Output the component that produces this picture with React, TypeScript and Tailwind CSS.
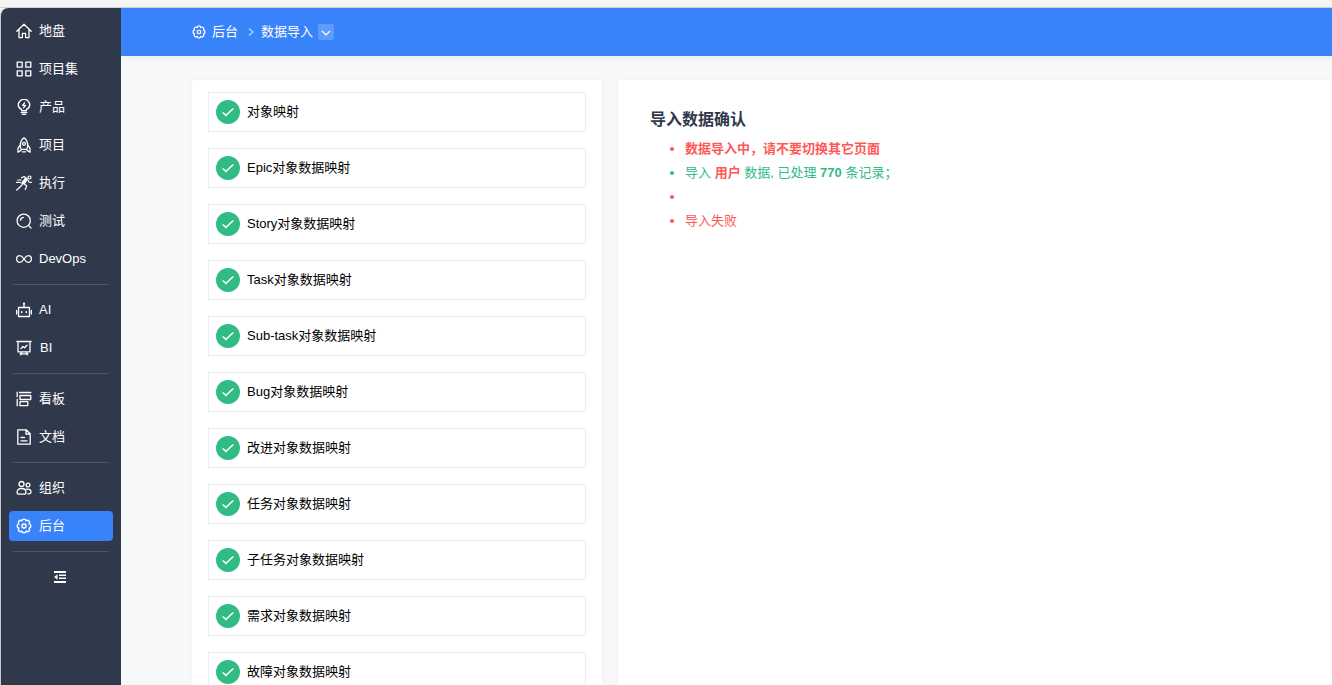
import React from "react";

interface NavItem {
  label: string;
  icon: React.ReactNode;
  active?: boolean;
  textClass?: string;
}

const Svg: React.FC<{ children: React.ReactNode; size?: number; width?: number }> = ({
  children,
  size = 16,
  width = 1.3,
}) => (
  <svg
    width={size}
    height={size}
    viewBox="0 0 16 16"
    fill="none"
    stroke="currentColor"
    strokeWidth={width}
    strokeLinecap="round"
    strokeLinejoin="round"
    className="shrink-0"
  >
    {children}
  </svg>
);

const GearIcon: React.FC<{ size?: number }> = ({ size = 16 }) => (
  <Svg size={size} width={1.4}>
    <path d="M5.900 2.900a2.130 2.130 0 014.200 0a2.130 2.130 0 013 3a2.130 2.130 0 010 4.200a2.130 2.130 0 01-3 3a2.130 2.130 0 01-4.200 0a2.130 2.130 0 01-3-3a2.130 2.130 0 010-4.200a2.130 2.130 0 013-3z" />
    <circle cx="8" cy="8" r="2" />
  </Svg>
);

const groups: NavItem[][] = [
  [
    {
      label: "地盘",
      icon: (
        <Svg>
          <path d="M.8 8.2L8 1.2l7.2 7M3 6.6v8h3.4v-4.2h3.2v4.2H13v-8" />
        </Svg>
      ),
    },
    {
      label: "项目集",
      icon: (
        <Svg>
          <path d="M1.2 1.2h5v5h-5zM9.8 1.2h5v5h-5zM1.2 9.8h5v5h-5zM9.8 9.8h5v5h-5z" />
        </Svg>
      ),
    },
    {
      label: "产品",
      icon: (
        <Svg>
          <path d="M5.600 11.600v-1.200C3.600 9.600 2.300 8 2.300 6a5.700 5.700 0 0111.400 0c0 2-1.300 3.600-3.300 4.400v1.200zM5.200 13.500h5.600M6.500 15.400h3" />
          <path d="M8.600 3.800L6.500 6.300h3L7.500 8.800" />
        </Svg>
      ),
    },
    {
      label: "项目",
      icon: (
        <Svg>
          <path d="M5 12.300c-1.400-4.700-.8-8.600 3-11.500 3.800 2.900 4.400 6.800 3 11.500zM4.300 8L2 11.200v4l3-1.800M11.700 8l2.300 3.200v4l-3-1.800M6.500 14.800h3" />
          <circle cx="8" cy="6.800" r="1.500" />
        </Svg>
      ),
    },
    {
      label: "执行",
      icon: (
        <Svg width={1.2}>
          <circle cx="13.500" cy="2.500" r="1.500" />
          <path d="M5.500 2.800L8 1.500l3 2.200M12 5l1 2.200 2.300.2M8.500 9.200l2.300 1.500-1.600 3.800M6 9.800L4.500 11.500.8 15M1.800 5h3.500M.5 7.300h4" />
          <path d="M9.800 4.200L6.800 8.200" strokeWidth="3" />
          <path d="M10.800 4.500L8.500 8.200" strokeWidth="1.800" />
        </Svg>
      ),
    },
    {
      label: "测试",
      icon: (
        <Svg>
          <circle cx="7.700" cy="7.700" r="6.600" />
          <path d="M12.600 12.600l2.400 2.400M4.500 7.300a3.300 3.300 0 012.800-2.900" />
        </Svg>
      ),
    },
    {
      label: "DevOps",
      icon: (
        <Svg>
          <path d="M8 8C6.500 5.700 5.500 4.700 3.900 4.700a3.300 3.300 0 000 6.600C5.500 11.300 6.500 10.300 8 8s2.500-3.300 4.100-3.300a3.300 3.300 0 010 6.600C10.500 11.300 9.500 10.300 8 8z" />
        </Svg>
      ),
    },
  ],
  [
    {
      label: "AI",
      icon: (
        <Svg>
          <path d="M2.500 5.500h11v9h-11zM8 5.500V2M.6 8.500v3.500M15.400 8.500v3.500" />
          <path d="M5.700 9.800v.6M10.300 9.800v.6" strokeWidth="1.600" />
          <circle cx="8" cy="1.700" r=".5" />
        </Svg>
      ),
    },
    {
      label: "BI",
      textClass: "pl-px",
      icon: (
        <Svg>
          <path d="M.8 1.500h14.400M2 1.500v10.300h12V1.500M5.800 11.800l-1 3M10.200 11.800l1 3M4 13.800h8M5 8.500l2-2 1.500 1.300L11 5.300" />
        </Svg>
      ),
    },
  ],
  [
    {
      label: "看板",
      icon: (
        <Svg>
          <path d="M1.200 1.200v4.500M1.200 8.500v6.300M3.500 1.500h11.300M4 4.500h10.800v4H4zM4 10.700h7.800v4H4z" />
        </Svg>
      ),
    },
    {
      label: "文档",
      icon: (
        <Svg>
          <path d="M1.800 .8h8.400l4 4v10.400H1.800zM10 1v4h4M5 8.500h3.500M5 11.800h6" />
        </Svg>
      ),
    },
  ],
  [
    {
      label: "组织",
      icon: (
        <Svg>
          <circle cx="5.500" cy="4" r="2.500" />
          <circle cx="12" cy="5" r="1.900" />
          <path d="M5.500 8.500c-2.800 0-4.400 1.500-4.400 3.700 0 1.300.7 1.900 2 1.900H8c1.300 0 2-.6 2-1.900 0-2.200-1.700-3.700-4.500-3.700zM10.500 9.200c2.800-.6 4.500.7 4.500 2.900 0 1.200-.5 1.700-1.700 1.700h-1.500" />
        </Svg>
      ),
    },
    { label: "后台", icon: <GearIcon />, active: true },
  ],
];

const steps = [
  "对象映射",
  "Epic对象数据映射",
  "Story对象数据映射",
  "Task对象数据映射",
  "Sub-task对象数据映射",
  "Bug对象数据映射",
  "改进对象数据映射",
  "任务对象数据映射",
  "子任务对象数据映射",
  "需求对象数据映射",
  "故障对象数据映射",
];

const Sidebar: React.FC = () => (
  <aside className="w-[121px] shrink-0 rounded-tl-lg border-l border-[#c9c9c7] bg-[#30394b] px-2 pt-2 text-white">
    {groups.map((group, index) => (
      <React.Fragment key={index}>
        <nav className="flex flex-col gap-2">
          {group.map((item) => (
            <a
              key={item.label}
              className={`flex h-[30px] w-[104px] items-center gap-[7px] rounded pl-[7px] ${
                item.active ? "bg-[#3883fa]" : ""
              }`}
            >
              {item.icon}
              <span className={`leading-5 ${item.textClass ?? ""}`}>{item.label}</span>
            </a>
          ))}
        </nav>
        <hr className="mx-1 my-2.5 border-[#4b5364]" />
      </React.Fragment>
    ))}
    {/* Collapse toggle */}
    <div className="flex h-[30px] items-center justify-center">
      <svg width="14" height="14" viewBox="0 0 14 14" fill="currentColor" className="-ml-0.5">
        <path d="M1 1h12v2H1zM6 4.500h7v1.500H6zM6 7.500h7V9H6zM1 11h12v2H1zM1 7l3.500-2.700v5.400z" />
      </svg>
    </div>
  </aside>
);

const Header: React.FC = () => (
  <header className="flex h-12 items-center bg-[#3883fa] pl-[71px] text-white shadow-[0_2px_8px_rgba(0,0,0,0.05)]">
    <GearIcon size={14} />
    <span className="-mt-px ml-1.5">后台</span>
    <svg width="8" height="8" viewBox="0 0 8 8" fill="none" stroke="currentColor" strokeWidth="1.500" className="ml-[9px] opacity-60">
      <path d="M2 .5L5.800 4 2 7.500" />
    </svg>
    <span className="-mt-px ml-1.5">数据导入</span>
    <button className="ml-[5px] flex size-4 items-center justify-center rounded-xs bg-white/20">
      <svg width="10" height="10" viewBox="0 0 10 10" fill="none" stroke="currentColor" strokeWidth="1.200" className="mt-px">
        <path d="M1 3l4 4 4-4" />
      </svg>
    </button>
  </header>
);

const App: React.FC = () => (
  <div className="flex h-[685px] flex-col overflow-hidden bg-[#f5f5f5] font-['Liberation_Sans','Noto_Sans_CJK_SC',sans-serif] text-[13px] leading-5">
    <div className="h-2 shrink-0 border-b border-[#d2d2d2] bg-[#f5f5f5]"></div>
    <div className="flex min-h-0 flex-1">
      <Sidebar />
      <div className="flex min-w-0 flex-1 flex-col bg-[#f7f8fa]">
        <Header />
        <main className="flex min-h-0 flex-1 gap-4 pt-6 pl-[71px]">
          {/* Import steps */}
          <section className="flex w-[410px] shrink-0 flex-col gap-4 rounded-t-xs bg-white px-4 pt-3 shadow-[0_0_6px_rgba(0,0,0,0.03)]">
            {steps.map((step) => (
              <div key={step} className="flex h-10 shrink-0 items-center border border-[#ebecf1] pl-[7px] text-black">
                <span className="flex size-6 items-center justify-center rounded-full bg-[#31bb85]">
                  <svg width="12" height="12" viewBox="0 0 12 12" fill="none" stroke="#fff" strokeWidth="1.600">
                    <path d="M.8 6.500l3.200 3 7.200-7" />
                  </svg>
                </span>
                <span className="ml-[7px]">{step}</span>
              </div>
            ))}
          </section>

          {/* Progress log */}
          <section className="flex-1 rounded-tl-xs bg-white pt-7 pl-8 shadow-[0_0_6px_rgba(0,0,0,0.03)]">
            <h2 className="text-base font-bold text-[#30394b]">导入数据确认</h2>
            <ul className="mt-[5px] list-disc pl-[35px] leading-6 text-[#ff5858]">
              <li className="h-6 font-bold">数据导入中，请不要切换其它页面</li>
              <li className="h-6 text-[#31bb85]">
                导入 <strong className="text-[#ff5858]">用户</strong> 数据, 已处理 <strong>770</strong> 条记录；
              </li>
              <li className="h-6"></li>
              <li className="h-6">导入失败</li>
            </ul>
          </section>
        </main>
      </div>
    </div>
  </div>
);

export default App;
